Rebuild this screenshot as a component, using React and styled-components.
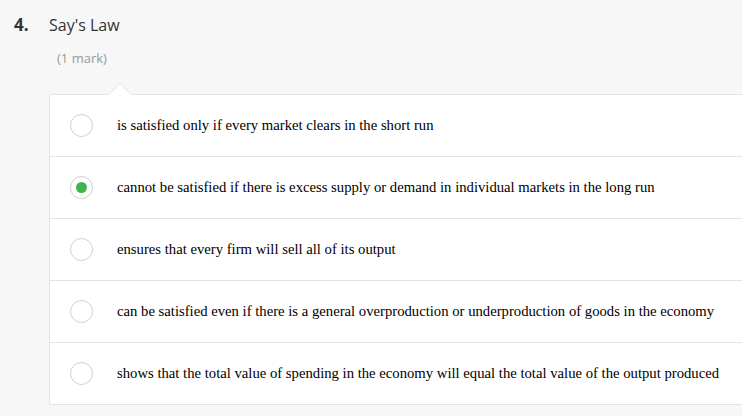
import React from 'react';
import styled, { createGlobalStyle } from 'styled-components';

const GlobalStyle = createGlobalStyle`
  html, body {
    margin: 0;
    padding: 0;
    background: #f7f7f7;
    overflow: hidden;
  }
`;

const Page = styled.div`
  width: 742px;
  height: 416px;
  background: #f7f7f7;
  font-family: 'Open Sans', sans-serif;
  overflow: hidden;
`;

const Header = styled.div`
  display: flex;
  align-items: baseline;
  padding: 13px 0 0 14px;
`;

const Number = styled.div`
  width: 35px;
  font-size: 17px;
  font-weight: 700;
  color: #333;
`;

const Title = styled.div`
  font-size: 16px;
  color: #333;
`;

const Mark = styled.div`
  margin: 13px 0 0 57px;
  font-size: 13px;
  color: #999;
`;

const Choices = styled.div`
  position: relative;
  margin: 27px 0 0 49px;
  width: 720px;
  background: #fff;
  border: 1px solid #e3e3e3;
  border-radius: 2px;

  &::before,
  &::after {
    content: '';
    position: absolute;
    left: 59px;
    width: 0;
    height: 0;
    border-left: 11px solid transparent;
    border-right: 11px solid transparent;
  }
  &::before {
    top: -12px;
    border-bottom: 11px solid #e3e3e3;
  }
  &::after {
    top: -11px;
    border-bottom: 11px solid #fff;
  }
`;

const Choice = styled.label`
  display: flex;
  align-items: center;
  height: 61px;
  padding-left: 20px;
  border-top: ${(p) => (p.$first ? 'none' : '1px solid #e3e3e3')};
`;

const Radio = styled.span`
  box-sizing: border-box;
  width: 23px;
  height: 23px;
  border-radius: 50%;
  border: 1px solid #d0d0d0;
  background: #fff;
  display: flex;
  align-items: center;
  justify-content: center;
  flex-shrink: 0;

  &::after {
    content: '';
    display: ${(p) => (p.$checked ? 'block' : 'none')};
    width: 11px;
    height: 11px;
    border-radius: 50%;
    background: #3db54a;
  }
`;

const ChoiceText = styled.span`
  margin-left: 24px;
  font-family: 'Liberation Serif', 'Times New Roman', serif;
  font-size: 14.7px;
  color: #000;
  white-space: nowrap;
`;

const options = [
  'is satisfied only if every market clears in the short run',
  'cannot be satisfied if there is excess supply or demand in individual markets in the long run',
  'ensures that every firm will sell all of its output',
  'can be satisfied even if there is a general overproduction or underproduction of goods in the economy',
  'shows that the total value of spending in the economy will equal the total value of the output produced',
];

export default function App() {
  return (
    <Page>
      <GlobalStyle />
      <Header>
        <Number>4.</Number>
        <Title>Say's Law</Title>
      </Header>
      <Mark>(1 mark)</Mark>
      <Choices>
        {options.map((text, i) => (
          <Choice key={i} $first={i === 0}>
            <Radio $checked={i === 1} />
            <ChoiceText>{text}</ChoiceText>
          </Choice>
        ))}
      </Choices>
    </Page>
  );
}
